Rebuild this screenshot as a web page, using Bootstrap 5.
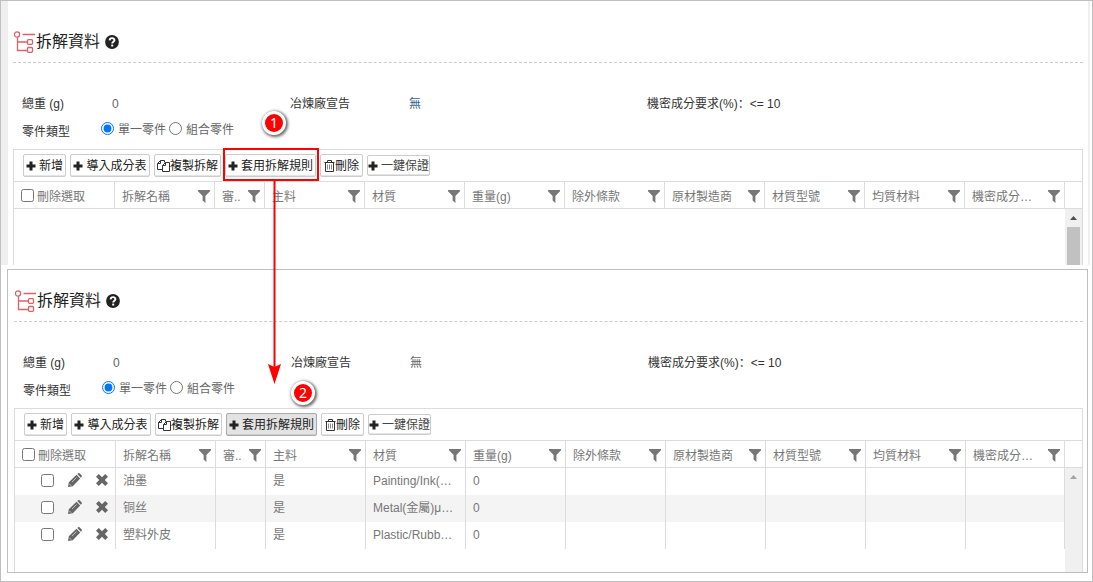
<!DOCTYPE html>
<html lang="zh-Hant">
<head>
<meta charset="utf-8">
<meta name="viewport" content="width=device-width, initial-scale=1">
<title>拆解資料</title>
<link href="https://cdn.jsdelivr.net/npm/bootstrap@5.3.0/dist/css/bootstrap.min.css" rel="stylesheet">
<style>
  body { font-family: "Liberation Sans", "Noto Sans CJK TC", sans-serif; font-size: 12px; line-height: 20px; color: #333; background: #fff; }
  .frame { min-height: 100vh; border: 1px solid #bfbfbf; padding-bottom: 8px; }
  .pane { display: flex; flex-direction: column; height: 264px; padding: 0 5px; overflow: hidden; }
  .pane-first { border-left: 7px solid #efefef; border-right: 2px solid #f0f0f0; margin-right: 2px; margin-bottom: 4px; }
  .pane-second { height: 304px; border: 1px solid #bfbfbf; margin: 0 4px 0 6px; padding: 0 4px 0 6px; }
  .pane-title { flex: none; height: 62px; padding: 20px 0 0 1px; border-bottom: 1px dashed #ccc; }
  .pane-second .pane-title { height: 52px; padding-top: 10px; }
  .pane-title h2 { font-size: 16px; line-height: 20px; font-weight: 400; color: #222; margin: 0 5px 0 1px; }
  .facts { padding: 31px 9px 7px; }
  .fact-key { width: 90px; }
  .fact-wide { width: 178px; }
  .fact-name { width: 119px; }
  .fact-mid { width: 238px; }
  .colon { font-family: "Noto Sans CJK SC", sans-serif; line-height: 16px; }
  .soft { color: #666; }
  .tinted { color: #35658f; }
  .kind-row { margin-top: 8px; }
  .kind-key { width: 79px; }
  .kind { width: 68px; margin-top: -2px; }
  .kind input { width: 13px; height: 13px; margin: 0 4px 4px 0; vertical-align: middle; }
  .grid { flex: 1; display: flex; flex-direction: column; border: 1px solid #dcdcdc; border-bottom: 0; min-height: 0; }
  .tools { flex: none; height: 31px; padding: 0 9px; gap: 4px; }
  .tool { display: flex; align-items: center; justify-content: center; gap: 3px; height: 23px; padding: 0 1px; border: 1px solid #ccc; border-radius: 2px; background: #fff; box-shadow: inset 0 -1px #e4e4e4; color: #222; font-size: 12px; line-height: 18px; white-space: nowrap; }
  .tool-tight { gap: 0; }
  .tool-on { background: #e3e3e3; border-color: #aaa; box-shadow: inset 0 -1px #ccc; }
  .w-short { width: 43px; } .w-mid { width: 80px; } .w-copy { width: 67px; } .w-long { width: 91px; }
  .w-small { width: 63px; height: 21px; color: #444; }
  .sheet { table-layout: fixed; width: 100%; color: #777; border-collapse: separate; border-spacing: 0; }
  .sheet th, .sheet td { font-weight: 400; padding: 0 6px 1px 7px; border-right: 1px solid #dcdcdc; height: 27px; white-space: nowrap; }
  .sheet th { padding: 3px 4px 0 7px; height: 28px; border-top: 1px solid #dcdcdc; border-bottom: 1px solid #dcdcdc; }
  .sheet th:last-child { border-right: 0; }
  .sheet tbody tr:nth-child(even) td { background: #f4f4f4; }
  .sheet input { width: 13px; height: 13px; margin: 0; }
  .sheet .pick { margin: 0 3px 2px 0; }
  .body-area { flex: 1; min-height: 0; overflow: hidden; }
  .track { width: 17px; background: #f0f0f0; }
  .thumb { width: 13px; flex: 1; background: #c1c1c1; }
  .row-act { padding: 0; border: 0; background: none; display: flex; }
  .acts { gap: 14px; padding: 0 0 2px 19px; }
  .target { position: absolute; left: 222px; top: 147px; width: 96px; height: 33px; border: 2px solid red; }
  .arrow { position: absolute; left: 267px; top: 180px; }
  .step { position: absolute; width: 24px; height: 24px; border: 3px solid #fff; border-radius: 50%; background: red; color: #fff; font: 14px/18px "Noto Sans", sans-serif; text-align: center; box-shadow: 1px 1px 3px 1px rgba(0,0,0,.6); }
  .step-one { left: 261px; top: 110px; }
  .step-two { left: 290px; top: 380px; }
</style>
</head>
<body>
<svg class="d-none">
  <symbol id="tree" viewBox="0 0 21 22"><g fill="none" stroke="#d9626a" stroke-width="1.300"><circle cx="3" cy="3.500" r="2.600"/><path d="M8.500 3.500h12.500M3.500 6.200v13.300h9.500M3.500 11h9.500"/><rect x="13.500" y="8.700" width="5" height="4.600" rx="1"/><rect x="13.500" y="16.500" width="5" height="4.800" rx="1"/></g></symbol>
  <symbol id="help" viewBox="0 0 14 14"><circle cx="7" cy="7" r="6.900" fill="#222"/><path d="M4.600 5.400c.2-3.100 5-2.800 4.800-.1C9.200 6.800 7.200 6.700 7.200 8.600" fill="none" stroke="#fff" stroke-width="1.900"/><path d="M6.200 9.600h2v1.900h-2z" fill="#fff"/></symbol>
  <symbol id="plus" viewBox="0 0 10 10"><path d="M3.500 .5h3v3h3v3h-3v3h-3v-3h-3v-3h3z" fill="#222"/></symbol>
  <symbol id="copy" viewBox="0 0 13 12"><g fill="none" stroke="#333"><path d="M5 9.500H.5V3.500l3-3h4v2M.5 3.500h3v-3M5.500 11.500v-6l3-3h4v9zM5.500 5.500h3v-3"/></g></symbol>
  <symbol id="bin" viewBox="0 0 11 12"><g fill="none" stroke="#333"><path d="M.5 2.500h10M3.500 2.500v-2h4v2M1.500 2.500v9h8v-9"/><path d="M3.500 4.500v5M5.500 4.500v5M7.500 4.500v5" stroke="#888"/></g></symbol>
  <symbol id="funnel" viewBox="0 0 12 13"><path d="M0 0h12v1.200L7.400 6v7L4.600 10.500V6L0 1.200z" fill="#777"/></symbol>
  <symbol id="pencil" viewBox="0 0 14 14"><path d="M0 14l.8-4.800L8.500 1.800 12.200 5.500 4.800 13.200zM9.300 1.100l.9-.8q.7-.5 1.400 0l2.100 2.100q.5.700 0 1.400l-.8 1z" fill="#666"/><path d="M1.300 10.800l1.900 1.900M4 9L8.500 4.500" stroke="#fff" stroke-width=".6"/></symbol>
  <symbol id="cross" viewBox="0 0 12 12"><path d="M2.800 0L6 3.200 9.200 0 12 2.800 8.800 6 12 9.200 9.200 12 6 8.800 2.800 12 0 9.200 3.200 6 0 2.800z" fill="#666"/></symbol>
</svg>
<main class="frame position-relative">
  <section class="pane pane-first" data-pane="a"></section>
  <section class="pane pane-second" data-pane="b"></section>
  <div class="target"></div>
  <svg class="arrow" width="13" height="203" aria-hidden="true"><path d="M6.500 0v190" stroke="red" stroke-width="2"/><path d="M0 183l6.500 3 6.500-3-6.500 20z" fill="red"/></svg>
  <span class="step step-one">1</span>
  <span class="step step-two">2</span>
</main>
<script>
  const icon = (name, w, h) => `<svg class="flex-shrink-0" width="${w}" height="${h}" aria-hidden="true"><use href="#${name}"/></svg>`;
  const heads = ['拆解名稱', '審..', '主料', '材質', '重量(g)', '除外條款', '原材製造商', '材質型號', '均質材料', '機密成分…'];
  const parts = [['油墨', 'Painting/Ink(…', '0'], ['铜丝', 'Metal(金屬)μ…', '0'], ['塑料外皮', 'Plastic/Rubb…', '0']];
  const actions = [['plus', '新增', 'w-short'], ['plus', '導入成分表', 'w-mid'], ['copy', '複製拆解', 'w-copy'],
    ['plus', '套用拆解規則', 'w-long'], ['bin', '刪除', 'w-short'], ['plus', '一鍵保證', 'w-small']];
  const cols = '<colgroup><col style="width:101px">' + heads.map((h, i) => `<col ${i < 9 ? `style="width:${i === 1 ? 50 : 100}px"` : ''}>`).join('');

  function tool([glyph, label, width], on) {
    const size = { plus: [10, 10], copy: [13, 12], bin: [11, 12] }[glyph];
    return `<button type="button" class="tool ${width} ${glyph === 'plus' ? '' : 'tool-tight'} ${on ? 'tool-on' : ''}">${icon(glyph, ...size)}${label}</button>`;
  }
  const headCell = h => `<th scope="col"><div class="d-flex align-items-center justify-content-between"><span>${h}</span>${icon('funnel', 12, 13)}</div></th>`;
  const bodyRow = ([name, stuff, weight]) => `<tr><td><div class="d-flex align-items-center acts"><input type="checkbox" aria-label="${name}"><button type="button" class="row-act" aria-label="編輯">${icon('pencil', 14, 14)}</button><button type="button" class="row-act" aria-label="移除">${icon('cross', 12, 12)}</button></div></td><td>${name}</td><td></td><td>是</td><td>${stuff}</td><td>${weight}</td>${'<td></td>'.repeat(5)}</tr>`;

  function render(id, rows, active) {
    document.querySelector(`[data-pane=${id}]`).innerHTML = `
    <header class="pane-title d-flex align-items-center">${icon('tree', 21, 22)}<h2>拆解資料</h2>${icon('help', 14, 14)}</header>
    <div class="facts">
      <div class="d-flex">
        <span class="fact-key">總重 (g)</span><span class="fact-wide soft">0</span>
        <span class="fact-name">冶煉廠宣告</span><span class="fact-mid ${active ? 'soft' : 'tinted'}">無</span>
        <span>機密成分要求(%)<span class="colon" lang="zh-Hans">：</span>&lt;= 10</span>
      </div>
      <div class="d-flex kind-row">
        <span class="kind-key">零件類型</span>
        <label class="kind soft text-nowrap"><input type="radio" name="kind-${id}" checked>單一零件</label>
        <label class="kind soft text-nowrap"><input type="radio" name="kind-${id}">組合零件</label>
      </div>
    </div>
    <div class="grid">
      <div class="tools d-flex align-items-center">${actions.map((a, i) => tool(a, active && i === 3)).join('')}</div>
      <table class="sheet">${cols}<col style="width:17px"></colgroup><thead><tr>
        <th scope="col"><label class="d-flex align-items-center"><input type="checkbox" class="pick">刪除選取</label></th>
        ${heads.map(headCell).join('')}<th></th></tr></thead></table>
      <div class="body-area d-flex">
        <div class="flex-grow-1">${rows.length ? `<table class="sheet">${cols}</colgroup><tbody>${rows.map(bodyRow).join('')}</tbody></table>` : ''}</div>
        <div class="track d-flex flex-column align-items-center">
          <svg class="flex-shrink-0" width="17" height="18" aria-hidden="true"><path d="M5 11l3.500-4 3.500 4z" fill="${active ? '#a3a3a3' : '#505050'}"/></svg>
          ${active ? '' : '<div class="thumb"></div>'}
        </div>
      </div>
    </div>`;
  }
  render('a', [], false);
  render('b', parts, true);
</script>
</body>
</html>
